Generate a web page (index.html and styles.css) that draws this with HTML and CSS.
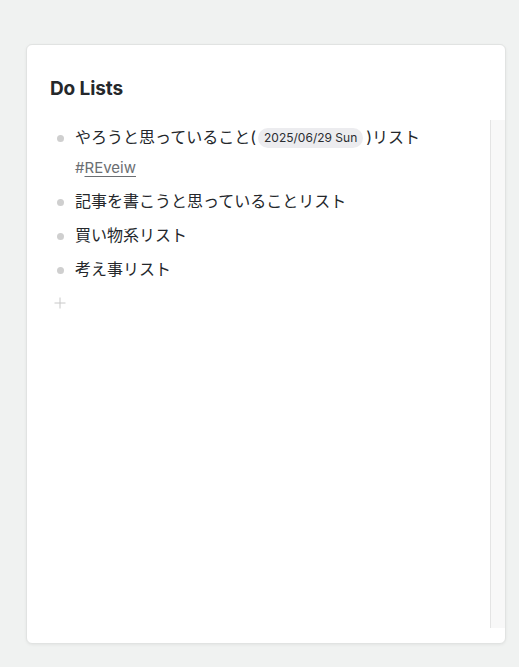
FILE: index.html
```html
<!DOCTYPE html>
<html lang="ja">
<head>
<meta charset="utf-8">
<link rel="stylesheet" href="styles.css">
</head>
<body>
<div class="page">
  <section class="card">
    <h2 class="card-title">Do Lists</h2>
    <div class="scroll-area">
      <div class="scroll">
        <ul class="list">
          <li class="item"><span class="bullet"></span><div class="text">やろうと思っていること(<span class="chip">2025/06/29 Sun</span>)リスト<br><a class="tag" href="#"><span class="hash">#</span><span class="tag-name">REveiw</span></a></div></li>
          <li class="item"><span class="bullet"></span><div class="text">記事を書こうと思っていることリスト</div></li>
          <li class="item"><span class="bullet"></span><div class="text">買い物系リスト</div></li>
          <li class="item"><span class="bullet"></span><div class="text">考え事リスト</div></li>
        </ul>
        <div class="add"><svg width="12" height="12" viewBox="0 0 12 12"><path d="M6 0.5V11.5M0.5 6H11.5" stroke="#c8c8c8" stroke-width="1" fill="none"/></svg></div>
      </div>
      <div class="scroll-track"></div>
    </div>
  </section>
</div>
</body>
</html>
```
FILE: styles.css
```css
html, body {
  margin: 0;
  padding: 0;
  background: #f0f2f1;
}
body {
  font-family: Inter, "Noto Sans CJK JP", sans-serif;
  color: #24272b;
}
.page {
  padding: 44px 13px 24px 26px;
}
.card {
  box-sizing: border-box;
  height: 600px;
  background: #fff;
  border: 1px solid #e1e3e2;
  border-radius: 6px;
  box-shadow: 0 1px 3px rgba(0,0,0,0.06);
  padding: 30px 0 15px 23px;
  display: flex;
  flex-direction: column;
}
.card-title {
  margin: 0;
  font-size: 19px;
  font-weight: 700;
  line-height: 28px;
  color: #25282b;
  letter-spacing: -0.1px;
}
.scroll-area {
  margin-top: 17px;
  flex: 1;
  display: flex;
  min-height: 0;
}
.scroll {
  flex: 1;
  overflow-y: auto;
  padding-top: 1px;
}
.scroll-track {
  flex: none;
  width: 14px;
  background: #f8f8f8;
  border-left: 1px solid #e4e4e4;
}
.list {
  list-style: none;
  margin: 0;
  padding: 0;
}
.item {
  display: flex;
  align-items: flex-start;
  padding: 2.25px 0;
  font-size: 16px;
  line-height: 29.5px;
}
.bullet {
  flex: none;
  width: 7px;
  height: 7px;
  border-radius: 50%;
  background: #cfcfcf;
  margin: 12px 11px 0 7px;
}
.text {
  flex: 1;
}
.chip {
  display: inline-block;
  font-size: 12px;
  line-height: 20px;
  padding: 0 6px;
  margin: 0 3px 0 2px;
  border-radius: 10px;
  background: #ececef;
  color: #2a2d31;
  vertical-align: 1px;
}
.tag {
  font-size: 15px;
  color: #6b6e72;
  text-decoration: none;
}
.tag-name {
  text-decoration: underline;
  text-underline-offset: 3px;
}
.add {
  display: flex;
  padding: 10px 0 0 4px;
}
.add svg {
  display: block;
}
```
